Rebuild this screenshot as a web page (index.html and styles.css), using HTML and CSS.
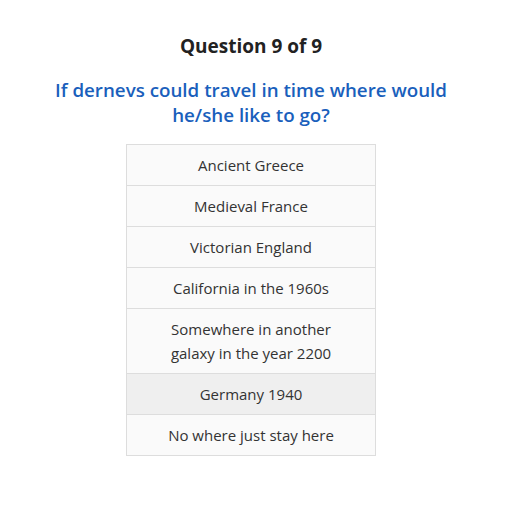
FILE: index.html
```html
<!DOCTYPE html>
<html>
<head>
<meta charset="utf-8">
<link rel="stylesheet" href="styles.css">
</head>
<body>
<div class="quiz">
  <h2 class="counter">Question 9 of 9</h2>
  <h3 class="question">If dernevs could travel in time where would he/she like to go?</h3>
  <ul class="answers">
    <li class="answer">Ancient Greece</li>
    <li class="answer">Medieval France</li>
    <li class="answer">Victorian England</li>
    <li class="answer">California in the 1960s</li>
    <li class="answer">Somewhere in another galaxy in the year 2200</li>
    <li class="answer hover">Germany 1940</li>
    <li class="answer">No where just stay here</li>
  </ul>
</div>
</body>
</html>
```

FILE: styles.css
```css
html, body {
  margin: 0;
  padding: 0;
  background: #ffffff;
}
body {
  font-family: "Open Sans", "Noto Sans", sans-serif;
  color: #333333;
}
.quiz {
  display: flex;
  flex-direction: column;
  align-items: center;
  padding-top: 34px;
  padding-right: 10px;
}
.counter {
  margin: 0;
  font-size: 19px;
  line-height: 24px;
  font-weight: 700;
  color: #222222;
}
.question {
  margin: 19px 0 0;
  width: 420px;
  text-align: center;
  font-size: 18.75px;
  line-height: 25px;
  font-weight: 600;
  color: #1a5fbc;
}
.answers {
  list-style: none;
  margin: 17px 0 0;
  padding: 0;
  width: 248px;
  border: 1px solid #dddddd;
  border-bottom: none;
}
.answer {
  background: #fafafa;
  border-bottom: 1px solid #dddddd;
  padding: 8px 30px;
  text-align: center;
  font-size: 15px;
  line-height: 24px;
  color: #333333;
}
.answer.hover {
  background: #efefef;
}
```
